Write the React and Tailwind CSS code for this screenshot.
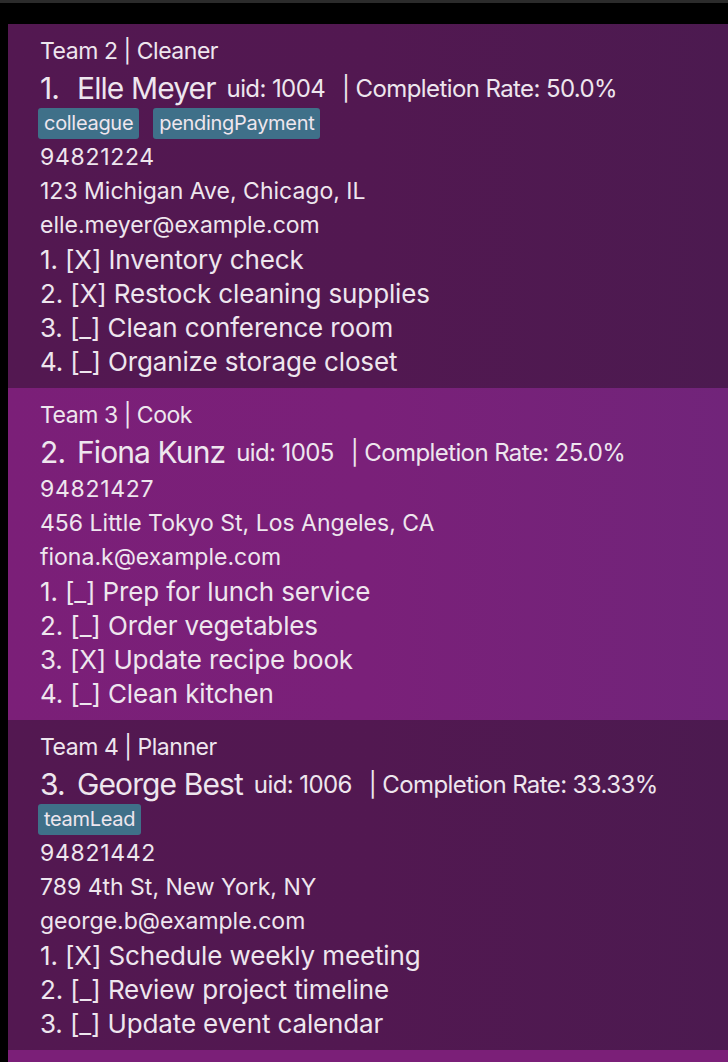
import React from 'react';

const people = [
  {
    team: 'Team 2 | Cleaner',
    name: 'Elle Meyer',
    uid: 1004,
    rate: '50.0%',
    tags: ['colleague', 'pendingPayment'],
    phone: '94821224',
    address: '123 Michigan Ave, Chicago, IL',
    email: 'elle.meyer@example.com',
    tasks: [
      '[X] Inventory check',
      '[X] Restock cleaning supplies',
      '[_] Clean conference room',
      '[_] Organize storage closet',
    ],
  },
  {
    team: 'Team 3 | Cook',
    name: 'Fiona Kunz',
    uid: 1005,
    rate: '25.0%',
    tags: [],
    phone: '94821427',
    address: '456 Little Tokyo St, Los Angeles, CA',
    email: 'fiona.k@example.com',
    tasks: [
      '[_] Prep for lunch service',
      '[_] Order vegetables',
      '[X] Update recipe book',
      '[_] Clean kitchen',
    ],
  },
  {
    team: 'Team 4 | Planner',
    name: 'George Best',
    uid: 1006,
    rate: '33.33%',
    tags: ['teamLead'],
    phone: '94821442',
    address: '789 4th St, New York, NY',
    email: 'george.b@example.com',
    tasks: [
      '[X] Schedule weekly meeting',
      '[_] Review project timeline',
      '[_] Update event calendar',
    ],
  },
];

const PersonCard = ({ person, index }) => {
  const odd = index % 2 === 1;
  return (
    <div
      className={`pl-8 pr-4 pt-[12px] pb-[9px] ${
        odd
          ? 'bg-gradient-to-r from-[#7b1f78] via-[#7a2079] to-[#71247a]'
          : 'bg-gradient-to-r from-[#531851] via-[#521851] to-[#4c1a50]'
      }`}
    >
      <div className="text-[23px] leading-[30px] tracking-[-0.02em]">{person.team}</div>
      <div className="flex items-center h-[42px] pt-[3px] whitespace-nowrap overflow-hidden">
        <span className="text-[30px] tracking-[-0.03em] w-[37px]">{index + 1}.</span>
        <span className="text-[30px] tracking-[-0.03em]">{person.name}</span>
        <span className="text-[24px] tracking-[-0.025em] ml-[11px]">uid: {person.uid}</span>
        <span className="text-[24px] tracking-[-0.025em] ml-[17px]">| Completion Rate: {person.rate}</span>
      </div>
      {person.tags.length > 0 && (
        <div className="flex gap-[14px] h-[32px] items-start -ml-[2px]">
          {person.tags.map((t) => (
            <span
              key={t}
              className="bg-[#3f7089] rounded-[3px] px-[6px] h-[31px] leading-[31px] text-[20px] tracking-[-0.015em]"
            >
              {t}
            </span>
          ))}
        </div>
      )}
      <div className="text-[23px] leading-[34px]">
        <div className="tracking-[0.03em]">{person.phone}</div>
        <div>{person.address}</div>
        <div>{person.email}</div>
      </div>
      <div className="text-[26px] leading-[34px] tracking-[-0.005em] mt-px">
        {person.tasks.map((t, i) => (
          <div key={i}>
            {i + 1}. {t}
          </div>
        ))}
      </div>
    </div>
  );
};

export default function App() {
  return (
    <div
      className="w-[728px] h-[1062px] overflow-hidden bg-black text-[#eee6ee] border-t-[3px] border-[#2b2b2b]"
      style={{ fontFamily: 'Inter, "Noto Sans", sans-serif' }}
    >
      <div className="pt-[21px] pl-2">
        {people.map((p, i) => (
          <PersonCard key={p.uid} person={p} index={i} />
        ))}
        <div className="h-[40px] bg-[#7b1f78]" />
      </div>
    </div>
  );
}
